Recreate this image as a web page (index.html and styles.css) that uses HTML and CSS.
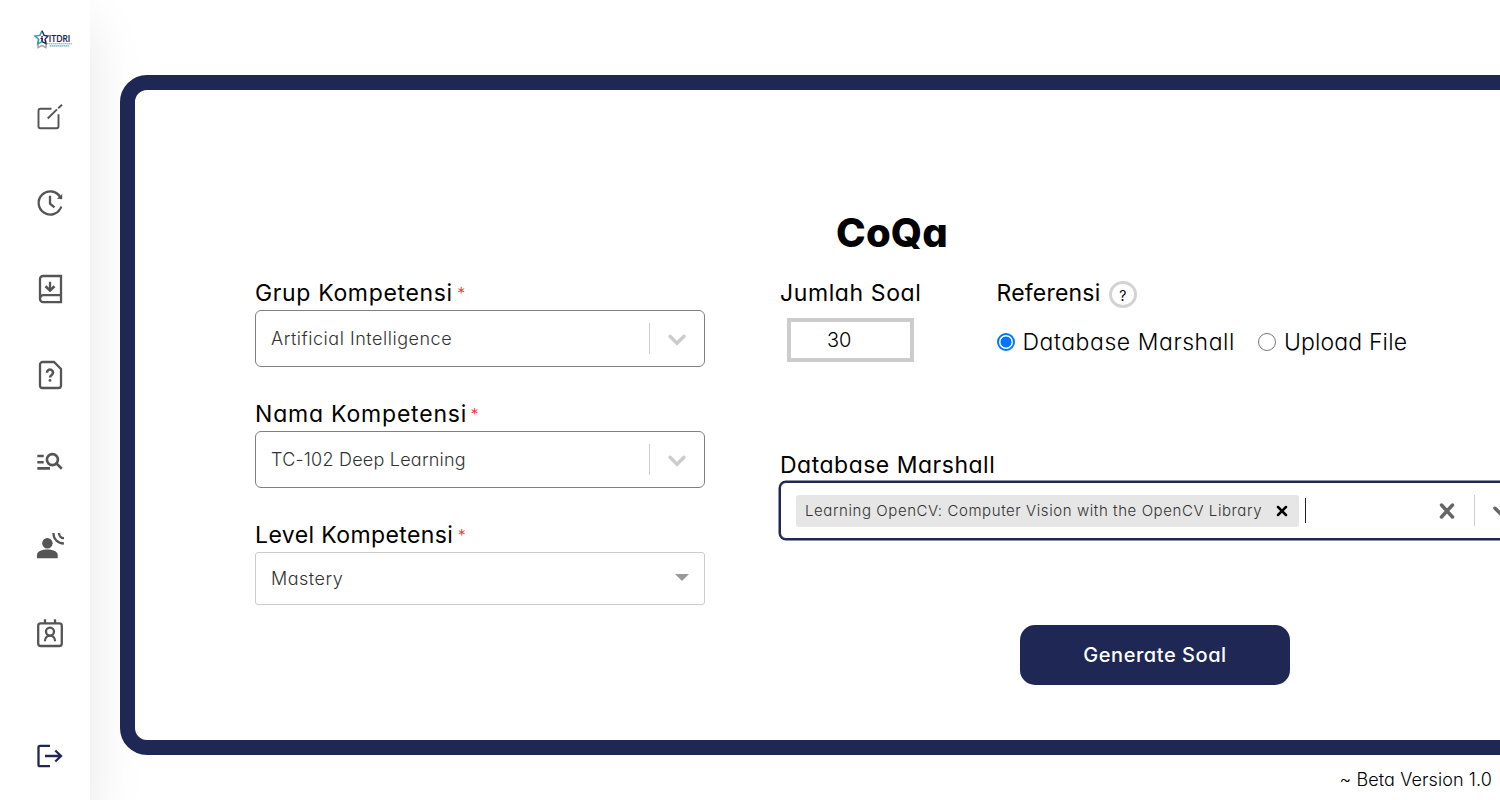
FILE: index.html
```html
<!DOCTYPE html>
<html lang="id">
<head>
<meta charset="utf-8">
<title>CoQa</title>
<link rel="stylesheet" href="styles.css">
</head>
<body>
<div class="app">
  <aside class="sidebar">
    <svg class="logo" viewBox="0 0 40 20">
      <path d="M5 11.5v7l4-2 4 2v-7" fill="none" stroke="#a3a3ab" stroke-width="1.5"/>
      <path d="M9 1.8 6.9 6.4 2 7l3.7 3.4-.9 4.4L9 12.7" fill="none" stroke="#2b9fae" stroke-width="1.5"/>
      <path d="M9 1.8l2.1 4.6L15 7l-3 3.4.9 4.2L9 12.7" fill="none" stroke="#1f2755" stroke-width="1.4"/>
      <path d="M8 7.2h2v1.2H8zM7.5 9h2.4v3.4H8.2V10h-.7z" fill="#1f2755"/>
      <text class="logo-name" x="15.8" y="12.500" textLength="21.5" lengthAdjust="spacingAndGlyphs">ITDRI</text>
      <path d="M14 14.8h25M16.5 16.900h20" stroke="#57bac6" stroke-width="1.1" stroke-dasharray="1.6 .4"/>
    </svg>
    <nav class="nav">
      <svg class="icon thin" viewBox="0 0 32 32"><path d="M17.5 7.700h-11a2 2 0 0 0-2 2V25.300a2 2 0 0 0 2 2h16a2 2 0 0 0 2-2V13.300M13.7 17.500 23 8.400M24.200 7.200 28 3.800"/></svg>
      <svg class="icon" viewBox="0 0 32 32"><path d="M27.300 19.500A11.600 11.600 0 1 1 26.300 10.200M16 8.700v8l4.500 3.600"/><path class="solid" d="M28.200 7v5.300l-5.300-.5z"/></svg>
      <svg class="icon" viewBox="0 0 32 32"><path d="M27 3H9a3 3 0 0 0-3 3v20a3.200 3.200 0 0 0 3.200 3.200H27zM27 22.200H9.500a3.400 3.400 0 0 0-3.400 3.200M16 8.700v8.800"/><path class="bold" d="M11.500 13.200l4.500 4.300 4.500-4.300"/></svg>
      <svg class="icon" viewBox="0 0 32 32"><path d="M20 3H8.500A2.500 2.500 0 0 0 6 5.500v21A2.500 2.500 0 0 0 8.500 29h16a2.500 2.500 0 0 0 2.500-2.500V10z"/><path class="bold" d="M13 13.700a3 3 0 1 1 4.700 2.300c-1.200.8-1.700 1.200-1.700 2.500"/><circle class="solid" cx="16" cy="21.400" r="1.400"/></svg>
      <svg class="icon bold" viewBox="0 0 32 32"><path d="M3.300 11h6.400M3.300 17.200h6.400M3.300 23.400H16M22.500 18.500l5.300 5.200"/><circle cx="18.400" cy="14.600" r="5.500"/></svg>
      <svg class="icon" viewBox="0 0 32 32"><circle class="solid" cx="13.400" cy="12.200" r="5.200"/><path class="solid" d="M3 27.300v-3.600c0-3.500 5.500-5.200 10.300-5.200s10.400 1.700 10.400 5.200v3.600z"/><path d="M19.400 2c0 6 4.400 10.500 10.500 10.500M25 2c0 3 2 5.200 5 5.200"/></svg>
      <svg class="icon" viewBox="0 0 32 32"><rect x="4.200" y="6.400" width="23.600" height="22.600" rx="2.500"/><circle cx="16" cy="14.600" r="4"/><path d="M11 2.300v4M21 2.300v4M10.900 24.300c0-7.600 10.200-7.600 10.200 0"/></svg>
    </nav>
    <svg class="icon logout" viewBox="0 0 32 32"><path d="M16 5.800H6a1.500 1.500 0 0 0-1.500 1.500v17.400a1.500 1.500 0 0 0 1.500 1.500H16M11 16h16M21.300 10.500l5.700 5.500-5.700 5.500"/></svg>
  </aside>
  <main class="main">
    <section class="panel">
      <h1 class="title">CoQa</h1>
      <div class="form">
        <div class="left">
          <div class="label"><span class="t-grup">Grup Kompetensi</span><span class="star">*</span></div>
          <div class="select">
            <span class="value v-ai">Artificial Intelligence</span><span class="sep"></span>
            <svg class="chev" viewBox="0 0 20 20"><path d="M3 7.300l7 7 7-7"/></svg>
          </div>
          <div class="label"><span class="t-nama">Nama Kompetensi</span><span class="star">*</span></div>
          <div class="select">
            <span class="value v-tc">TC-102 Deep Learning</span><span class="sep"></span>
            <svg class="chev" viewBox="0 0 20 20"><path d="M3 7.300l7 7 7-7"/></svg>
          </div>
          <div class="label"><span class="t-level">Level Kompetensi</span><span class="star">*</span></div>
          <div class="select plain"><span class="value v-ma">Mastery</span><span class="caret"></span></div>
        </div>
        <div class="right">
          <div class="row">
            <div class="count">
              <div class="label"><span class="t-jumlah">Jumlah Soal</span></div>
              <div class="number">30</div>
            </div>
            <div class="refs">
              <div class="label"><span class="t-ref">Referensi</span><span class="help">?</span></div>
              <div class="radios">
                <span class="radio on"></span><span class="opt t-opt1">Database Marshall</span>
                <span class="radio second"></span><span class="opt t-opt2">Upload File</span>
              </div>
            </div>
          </div>
          <div class="label"><span class="t-db">Database Marshall</span></div>
          <div class="select multi">
            <span class="chip"><span class="chip-text">Learning OpenCV: Computer Vision with the OpenCV Library</span>
              <svg class="chip-x" viewBox="0 0 12 12"><path d="M2 2l8 8M10 2l-8 8"/></svg></span>
            <span class="cursor"></span>
            <svg class="clear" viewBox="0 0 20 20"><path d="M4.500 4l11 12M15.500 4l-11 12"/></svg>
            <span class="sep"></span>
            <svg class="chev dark" viewBox="0 0 20 20"><path d="M3 7.300l7 7 7-7"/></svg>
          </div>
          <button class="generate"><span class="t-gen">Generate Soal</span></button>
        </div>
      </div>
    </section>
    <footer class="footer"><span class="t-foot">~ Beta Version 1.0</span></footer>
  </main>
</div>
</body>
</html>
```
FILE: styles.css
```css
* { box-sizing: border-box; }
body { margin: 0; overflow: hidden; font-family: Inter, "Open Sans", sans-serif; font-feature-settings: "cv11" 1; color: #000; background: #fff; }
.app { display: flex; width: 1500px; height: 800px; overflow: hidden; }
.sidebar { width: 90px; height: 800px; flex: none; padding: 29px 0 0 34px; display: flex; flex-direction: column; box-shadow: 0 25px 55px rgba(0, 0, 0, .1); background: #fff; }
.logo { width: 40px; height: 20px; margin-left: -1px; overflow: visible; }
.logo-name { font: 700 10px Lato, sans-serif; fill: #1f2755; }
.nav { display: flex; flex-direction: column; gap: 54px; margin-top: 52px; }
.icon { display: block; width: 32px; height: 32px; fill: none; stroke: #555; stroke-width: 2.300; }
.icon .solid { fill: #555; stroke: none; }
.bold { stroke-width: 2.600; }
.thin { stroke-width: 1.900; }
.logout { margin-top: 91px; stroke: #1f2755; }
.main { flex: 1; min-width: 0; padding: 75px 0 0 30px; }
.panel { width: 1544px; height: 680px; border: 15px solid #1f2755; border-radius: 27px; background: #fff; padding-top: 113px; }
.title { margin: 0; height: 60px; line-height: 59px; font-size: 40px; font-weight: 800; text-align: center; letter-spacing: .2px; }
.form { display: flex; gap: 75px; padding: 12px 0 0 120px; }
.left { width: 450px; }
.right { width: 750px; }
.label { display: flex; align-items: center; height: 35px; padding-top: 2px; font-size: 23px; line-height: 33px; white-space: nowrap; }
.t-grup { letter-spacing: .65px; }
.t-nama { letter-spacing: .8px; }
.t-level { letter-spacing: .4px; }
.t-jumlah { letter-spacing: .6px; }
.t-ref { letter-spacing: .2px; }
.t-db { letter-spacing: .5px; }
.t-opt1 { letter-spacing: .55px; }
.t-opt2 { letter-spacing: .15px; }
.v-ai { letter-spacing: .52px; }
.v-tc { letter-spacing: .22px; }
.v-ma { letter-spacing: .5px; }
.chip-text { letter-spacing: .58px; }
.t-gen { letter-spacing: .55px; }
.t-foot { letter-spacing: .1px; }
.star { color: #f22; font-size: 16px; margin-left: 4.5px; font-weight: 300; }
.t-nama + .star { margin-left: 3.5px; }
.select { display: flex; align-items: center; height: 57px; margin-bottom: 29px; padding: 0 17px 0 15px; border: 1px solid #808080; border-radius: 6px; background: #fff; }
.value { flex: 1; font-size: 18px; font-weight: 300; color: #333; white-space: nowrap; }
.sep { width: 1px; height: 31px; background: #ccc; }
.chev { width: 20px; height: 20px; margin-left: 17px; fill: none; stroke: #ccc; stroke-width: 3.500; stroke-linecap: round; }
.dark { stroke: #666; }
.plain { height: 53px; border-color: #ccc; border-radius: 3px; margin: 0; padding-right: 15px; }
.caret { border: 7px solid transparent; border-top-color: #999; border-bottom: 0; margin-top: -3px; }
.row { display: flex; height: 172px; }
.count { width: 216.500px; }
.number { width: 127px; height: 44px; margin: 8px 0 0 7px; border: 4px solid #ccc; font-size: 20px; font-weight: 300; line-height: 36px; padding-left: 36px; }
.help { width: 28px; height: 27px; margin: 1px 0 0 8.5px; border: 3px solid #d3d3d3; border-radius: 50%; font-size: 14px; line-height: 23px; text-align: center; }
.radios { display: flex; align-items: center; height: 36px; margin-top: 14px; white-space: nowrap; }
.radio { width: 18px; height: 18px; flex: none; border: 1px solid #767676; border-radius: 50%; }
.on { border: 2px solid #0075ff; background: radial-gradient(circle, #0075ff 5.200px, #fff 5.800px); }
.second { margin-left: 23px; }
.opt { margin-left: 8px; font-size: 23px; font-weight: 300; }
.multi { height: 57px; border-color: #1f2755; border-radius: 6px; box-shadow: 0 0 0 1.500px #1f2755; }
.chip { display: flex; align-items: center; height: 32px; width: 503px; border-radius: 3px; background: #e6e6e6; padding: 0 11px 0 9px; font-size: 15px; font-weight: 300; color: #333; justify-content: space-between; white-space: nowrap; }
.chip-x { width: 12px; height: 12px; stroke: #000; stroke-width: 2.500; stroke-linecap: round; }
.cursor { width: 1px; height: 25px; background: #222; margin: 0 auto 0 6px; }
.clear { width: 20px; height: 20px; stroke: #666; stroke-width: 3.500; stroke-linecap: round; margin-right: 17px; }
.generate { display: block; width: 270px; height: 60px; margin: 86px auto 0; border: 0; border-radius: 15px; background: #1f2755; color: #fff; font: 500 20px/60px Inter, sans-serif; font-feature-settings: inherit; padding: 0; }
.footer { padding: 10px 8px 0 0; font-size: 18px; font-weight: 300; line-height: 30px; text-align: right; }
```
